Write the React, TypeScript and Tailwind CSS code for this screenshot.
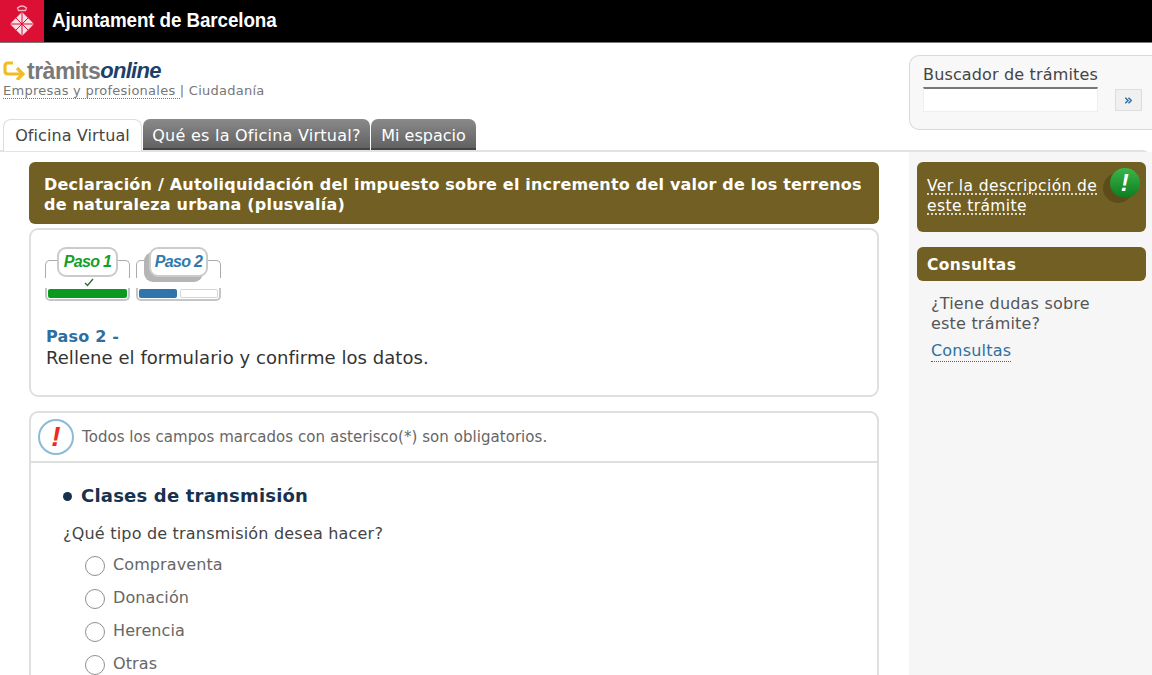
import { ChevronsRight } from 'lucide-react';

function CityLogo() {
  return (
    <svg width="44" height="42" viewBox="0 0 44 42">
      <rect width="44" height="42" fill="#dc0f35" />
      <path d="M17.5 8q4.5-4 9 0l-1 2.5h-7z" fill="none" stroke="#f3b5c2" strokeWidth="1.3" />
      <path d="M22 12L34 24L22 36L10 24Z" fill="#fbdfe5" />
      <path d="M22 12v24M16 18l12 12M28 18l-12 12M10 24h24" stroke="#dc0f35" strokeWidth="1" />
    </svg>
  );
}

function StepBadge({ label, color, shadow }: { label: string; color: string; shadow?: boolean }) {
  return (
    <div className={`relative z-10 h-[30px] rounded-[9px] border-2 border-[#c9cbce] bg-white text-center italic font-bold text-[16px] leading-[25px] tracking-[-0.7px] font-['Liberation_Sans',sans-serif] ${color} ${shadow ? 'shadow-[-5px_5px_0_#b5b5b5]' : ''}`}>
      {label}
    </div>
  );
}

function Steps() {
  return (
    <div className="flex gap-[6px]">
      <div className="relative w-[85px] h-[54px]">
        <div className="absolute left-0 right-0 top-[13px] h-[18px] rounded-t-[5px] border-x border-t border-[#a9abae]" />
        <div className="absolute left-[12px] top-0 w-[61px]"><StepBadge label="Paso 1" color="text-[#12a02a]" /></div>
        <svg className="absolute left-[39px] top-[31px]" width="10" height="9" viewBox="0 0 10 9"><path d="M1 5l2.5 2.5L9 1" fill="none" stroke="#2c6e38" strokeWidth="1.4" /></svg>
        <div className="absolute left-0 right-0 bottom-0 h-[13px] rounded-b-[5px] border-x-2 border-b-2 border-[#c3c5c8] p-px">
          <div className="h-[9px] rounded-[2px] bg-[#0b9a1f]" />
        </div>
      </div>
      <div className="relative w-[85px] h-[54px]">
        <div className="absolute left-0 right-0 top-[13px] h-[18px] rounded-t-[5px] border-x border-t border-[#a9abae]" />
        <div className="absolute left-[13px] top-0 w-[59px]"><StepBadge label="Paso 2" color="text-[#2f79ad]" shadow /></div>
        <div className="absolute left-0 right-0 bottom-0 h-[13px] flex gap-[3px] rounded-b-[5px] border-x-2 border-b-2 border-[#c3c5c8] p-px">
          <div className="w-[38px] h-[9px] rounded-[2px] bg-[#2f75ad]" />
          <div className="flex-1 h-[9px] rounded-[2px] border border-[#d5d5d5] bg-white" />
        </div>
      </div>
    </div>
  );
}

function RadioRow({ label }: { label: string }) {
  return (
    <label className="flex items-center gap-[8px] h-[33px]">
      <span className="w-[20px] h-[20px] rounded-full border-[1.5px] border-[#8f8f8f] bg-white mt-[2px]" />
      <span className="text-[16px] tracking-[0.1px] text-[#666]">{label}</span>
    </label>
  );
}

export default function App() {
  return (
    <div className="w-[1152px] h-[675px] overflow-hidden bg-white font-['DejaVu_Sans',sans-serif]">
      <header className="flex items-center h-[43px] bg-black border-b border-[#777]">
        <CityLogo />
        <span className="ml-[8px] -mt-[2px] text-white text-[20px] font-bold tracking-[-0.1px] font-['Liberation_Sans',sans-serif] scale-x-[0.94] origin-left whitespace-nowrap">
          Ajuntament de Barcelona
        </span>
      </header>

      <div className="flex justify-between h-[75px]">
        <div className="pl-[3px] pt-[17px]">
          <div className="flex items-center h-[22px]">
            <svg width="23" height="20" viewBox="0 0 23 20" className="-mt-[2px]">
              <path d="M10 3H5Q2 3 2 6v5q0 3 3 3h13" fill="none" stroke="#f3bb24" strokeWidth="3.2" />
              <path d="M14 8l6 6-6 6" fill="none" stroke="#f3bb24" strokeWidth="3.2" />
            </svg>
            <span className="ml-[1px] text-[23px] font-bold tracking-[-0.5px] leading-none text-[#77797b] font-['Liberation_Sans',sans-serif]">tràmits</span>
            <span className="text-[22px] font-bold italic tracking-[-0.7px] leading-none text-[#1d3f68] font-['Liberation_Sans',sans-serif]">online</span>
          </div>
          <div className="text-[13px] tracking-[0.25px] leading-[17px] text-[#777] whitespace-nowrap">
            <span className="border-b border-dotted border-[#777]">Empresas y profesionales </span>
            <span> | Ciudadanía</span>
          </div>
        </div>
        <div className="relative z-10 mt-[12px] w-[243px] h-[75px] pl-[13px] pt-[9px] rounded-l-[10px] border border-r-0 border-[#d9d9d9] bg-[#f8f8f8]">
          <div className="text-[16px] tracking-[0.15px] leading-[20px] text-[#444] whitespace-nowrap">Buscador de trámites</div>
          <div className="flex items-start gap-[17px] mt-[2px]">
            <div className="w-[175px] h-[25px] border-t-2 border-x border-b border-x-[#eee] border-b-[#eee] border-t-[#777] bg-white" />
            <button className="mt-[2px] w-[27px] h-[22px] flex items-center justify-center border border-[#ddd] bg-[#f0f0f0]">
              <ChevronsRight size={11} strokeWidth={3.5} className="text-[#2f6fa5]" />
            </button>
          </div>
        </div>
      </div>

      <nav className="relative flex items-end h-[32px] pl-[3px] gap-px">
        <div className="relative z-10 w-[139px] h-[32px] -mb-px pt-[2px] text-center rounded-t-[8px] border border-b-0 border-[#ddd] bg-white text-[16px] tracking-[0.1px] leading-[27px] text-[#444] whitespace-nowrap">Oficina Virtual</div>
        <div className="w-[227px] h-[31px] text-center rounded-t-[7px] bg-gradient-to-b from-[#8a8a8a] to-[#626262] border-b-2 border-[#444] text-white text-[16px] tracking-[0.25px] leading-[33px] whitespace-nowrap">Qué es la Oficina Virtual?</div>
        <div className="w-[105px] h-[31px] text-center rounded-t-[7px] bg-gradient-to-b from-[#8a8a8a] to-[#626262] border-b-2 border-[#444] text-white text-[16px] leading-[33px] whitespace-nowrap">Mi espacio</div>
      </nav>

      <main className="flex border-t-2 border-[#e2e2e2] rounded-tr-[10px]">
        <div className="w-[909px] pl-[29px] pr-[30px] pt-[10px]">
          <h1 className="h-[62px] pl-[15px] pr-[10px] pt-[13px] rounded-[6px] bg-[#725f23] text-white font-bold text-[16px] tracking-[0.2px] leading-[20px]">
            Declaración / Autoliquidación del impuesto sobre el incremento del valor de los terrenos de naturaleza urbana (plusvalía)
          </h1>
          <section className="mt-[4px] h-[169px] rounded-[9px] border-2 border-[#dfdfdf] pl-[14px] pr-[15px] pt-[17px]">
            <Steps />
            <div className="mt-[26px] pl-px text-[16px] tracking-[0.2px] leading-[20px] font-bold text-[#2f6f9f]">Paso 2 -</div>
            <p className="pl-px text-[18px] tracking-[0.05px] leading-[22px] text-[#333]">Rellene el formulario y confirme los datos.</p>
          </section>
          <section className="mt-[14px] h-[300px] rounded-t-[9px] border-2 border-[#dfdfdf]">
            <div className="flex items-center h-[50px] pl-[7px] gap-[8px] border-b-2 border-[#dfdfdf]">
              <span className="w-[36px] h-[36px] flex items-center justify-center rounded-full border-2 border-[#8dbbd6] text-[#ee2a1b] font-bold italic text-[28px] leading-none font-['Liberation_Sans',sans-serif]">!</span>
              <span className="text-[15px] tracking-[0.05px] text-[#666] whitespace-nowrap">Todos los campos marcados con asterisco(*) son obligatorios.</span>
            </div>
            <div className="pl-[32px] pt-[19px]">
              <h2 className="flex items-center gap-[9px] text-[18px] tracking-[0.2px] leading-[28px] font-bold text-[#16324f]">
                <span className="w-[9px] h-[9px] rounded-full bg-[#16324f]" />
                Clases de transmisión
              </h2>
              <p className="mt-[13px] text-[16px] tracking-[0.2px] leading-[22px] text-[#444]">¿Qué tipo de transmisión desea hacer?</p>
              <div className="mt-[3px] pl-[22px]">
                <RadioRow label="Compraventa" />
                <RadioRow label="Donación" />
                <RadioRow label="Herencia" />
                <RadioRow label="Otras" />
              </div>
            </div>
          </section>
        </div>

        <aside className="w-[243px] h-[530px] bg-[#f6f6f7] pl-[8px] pr-[6px] pt-[10px]">
          <div className="relative h-[70px] rounded-[6px] bg-[#725f23] pl-[10px] pr-[42px] pt-[14px] text-[15.5px] tracking-[0.4px] leading-[20px] text-white">
            <span className="underline decoration-dotted underline-offset-[3px]">Ver la descripción de este trámite</span>
            <span className="absolute right-[13px] top-[11px] w-[30px] h-[30px] rounded-full bg-[#5c4c1c]" />
            <span className="absolute right-[6px] top-[6px] w-[30px] h-[30px] flex items-center justify-center rounded-full bg-gradient-to-b from-[#39b54a] to-[#0a7d1e] text-white font-bold italic text-[24px] leading-none font-['Liberation_Sans',sans-serif]">!</span>
          </div>
          <div className="mt-[15px] h-[34px] rounded-[6px] bg-[#725f23] pl-[10px] text-white font-bold text-[15.5px] tracking-[0.4px] leading-[37px]">Consultas</div>
          <div className="pl-[14px] pr-[30px] pt-[13px] text-[16px] tracking-[0.2px] leading-[20px] text-[#555]">
            <p>¿Tiene dudas sobre este trámite?</p>
            <a className="mt-[7px] block w-max border-b border-dotted border-[#2f6f9f] text-[#2f6f9f] text-[16px] tracking-[0.2px] leading-[20px]">Consultas</a>
          </div>
        </aside>
      </main>
    </div>
  );
}
